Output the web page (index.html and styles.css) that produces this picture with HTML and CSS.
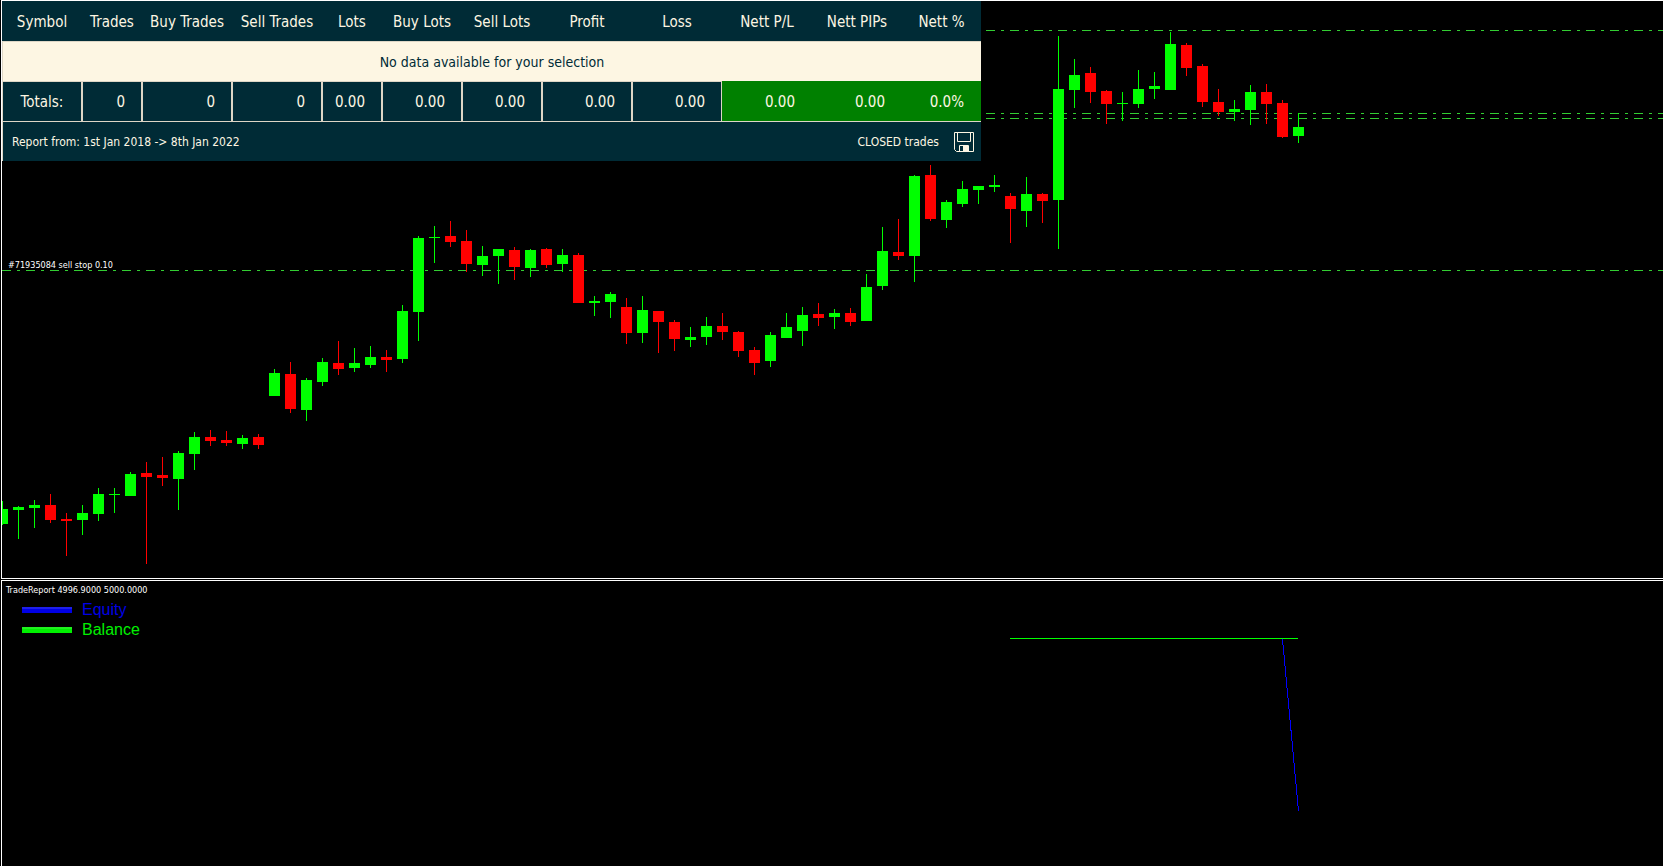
FILE: index.html
```html
<!DOCTYPE html>
<html lang="en">
<head>
  <meta charset="UTF-8">
  <title>Trade Report</title>
  <link rel="stylesheet" href="styles.css">
</head>
<body>

  <main class="terminal">
    <section class="price-panel">
      <svg class="price-chart" id="price-chart" shape-rendering="crispEdges">
        <g class="level">
          <line x1="0" y1="29.5" x2="100%" y2="29.5" />
          <line x1="0" y1="112.5" x2="100%" y2="112.5" />
          <line x1="0" y1="117.5" x2="100%" y2="117.5" />
          <line x1="0" y1="269.5" x2="100%" y2="269.5" />
        </g>
        <g id="candles"></g>
        <text class="order-label" x="6" y="267">#71935084 sell stop 0.10</text>
      </svg>

      <table class="report">
        <colgroup>
          <col class="w80"><col class="w60"><col class="w90"><col class="w90">
          <col class="w60"><col class="w80"><col class="w80"><col class="w90">
          <col class="w90"><col class="w90"><col class="w90"><col>
        </colgroup>
        <thead>
          <tr>
            <th>Symbol</th>
            <th>Trades</th>
            <th>Buy Trades</th>
            <th>Sell Trades</th>
            <th>Lots</th>
            <th>Buy Lots</th>
            <th>Sell Lots</th>
            <th>Profit</th>
            <th>Loss</th>
            <th>Nett P/L</th>
            <th>Nett PIPs</th>
            <th>Nett %</th>
          </tr>
        </thead>
        <tbody>
          <tr>
            <td class="empty" colspan="12">No data available for your selection</td>
          </tr>
          <tr class="totals">
            <th>Totals:</th>
            <td>0</td>
            <td>0</td>
            <td>0</td>
            <td>0.00</td>
            <td>0.00</td>
            <td>0.00</td>
            <td>0.00</td>
            <td>0.00</td>
            <td class="nett">0.00</td>
            <td class="nett">0.00</td>
            <td class="nett">0.0%</td>
          </tr>
        </tbody>
        <tfoot>
          <tr>
            <td colspan="12">
              <div class="status">
                <span>Report from: 1st Jan 2018 -&gt; 8th Jan 2022</span>
                <span class="mode">CLOSED trades</span>
                <button class="save" type="button" aria-label="Save report">
                  <svg width="20" height="20" viewBox="0 0 20 20">
                    <path d="M.5 .5h19v19h-17l-2-2z" />
                    <path d="M3.5 .5v9h13v-9" />
                    <path d="M5.5 19.5v-6h9v6" />
                    <rect x="9" y="14" width="5" height="5" />
                  </svg>
                </button>
              </div>
            </td>
          </tr>
        </tfoot>
      </table>
    </section>

    <section class="equity-panel">
      <svg class="equity-chart" shape-rendering="crispEdges">
        <polyline class="equity" points="1280.5,58 1296.5,230" />
        <line class="balance" x1="1008" y1="57.5" x2="1296" y2="57.5" />
      </svg>
      <div class="indicator">
        <p class="indicator-name">TradeReport 4996.9000 5000.0000</p>
        <ul class="legend">
          <li class="legend-equity">Equity</li>
          <li class="legend-balance">Balance</li>
        </ul>
      </div>
    </section>
  </main>

  <script>
    // direction, high, body top, body bottom, low
    const candles = [
      ['up', 501, 509, 524, 525], ['up', 506, 507, 510, 539], ['up', 500, 505, 508, 528],
      ['down', 494, 505, 520, 523], ['down', 513, 519, 521, 556], ['up', 505, 513, 520, 535],
      ['up', 488, 494, 514, 521], ['up', 488, 494, 495, 513], ['up', 472, 474, 496, 496],
      ['down', 462, 473, 477, 564], ['down', 457, 475, 478, 486], ['up', 451, 453, 479, 510],
      ['up', 432, 437, 454, 470], ['down', 430, 437, 441, 446], ['down', 431, 440, 443, 446],
      ['up', 435, 438, 444, 449], ['down', 434, 437, 445, 449], ['up', 369, 373, 396, 396],
      ['down', 362, 374, 409, 413], ['up', 378, 380, 410, 421], ['up', 358, 362, 382, 386],
      ['down', 341, 363, 369, 375], ['up', 348, 363, 368, 372], ['up', 346, 357, 365, 368],
      ['down', 350, 357, 360, 372], ['up', 305, 311, 359, 363], ['up', 236, 238, 312, 341],
      ['up', 226, 237, 238, 263], ['down', 221, 236, 242, 247], ['down', 230, 241, 264, 272],
      ['up', 246, 256, 265, 276], ['up', 249, 249, 256, 284], ['down', 247, 250, 267, 280],
      ['up', 249, 250, 268, 277], ['down', 248, 249, 265, 268], ['up', 249, 255, 264, 272],
      ['down', 253, 255, 303, 303], ['up', 296, 301, 303, 316], ['up', 292, 294, 302, 318],
      ['down', 298, 307, 333, 344], ['up', 296, 310, 333, 343], ['down', 311, 311, 322, 353],
      ['down', 320, 322, 339, 351], ['up', 327, 337, 340, 347], ['up', 317, 326, 337, 345],
      ['down', 313, 326, 332, 340], ['down', 331, 332, 351, 357], ['down', 347, 350, 363, 375],
      ['up', 332, 335, 361, 367], ['up', 313, 327, 338, 338], ['up', 307, 315, 331, 346],
      ['down', 303, 314, 318, 326], ['up', 309, 313, 317, 329], ['down', 308, 313, 322, 326],
      ['up', 274, 287, 321, 321], ['up', 227, 251, 286, 290], ['down', 219, 252, 256, 260],
      ['up', 175, 176, 256, 282], ['down', 165, 175, 219, 221], ['up', 200, 202, 220, 228],
      ['up', 181, 189, 204, 207], ['up', 186, 186, 190, 204], ['up', 175, 185, 187, 192],
      ['down', 193, 196, 209, 243], ['up', 177, 194, 211, 227], ['down', 193, 194, 201, 223],
      ['up', 36, 89, 200, 249], ['up', 59, 75, 90, 108], ['down', 67, 73, 92, 103],
      ['down', 90, 91, 104, 124], ['up', 92, 103, 104, 121], ['up', 70, 89, 104, 108],
      ['up', 72, 86, 89, 99], ['up', 32, 44, 90, 90], ['down', 43, 45, 68, 76],
      ['down', 64, 66, 102, 107], ['down', 89, 102, 112, 116], ['up', 100, 109, 112, 121],
      ['up', 85, 92, 110, 125], ['down', 84, 92, 104, 124], ['down', 100, 103, 137, 138],
      ['up', 113, 127, 136, 143]
    ];
    const step = 16;
    const bodyWidth = 11;
    const borderTop = 1;
    const group = document.getElementById('candles');

    function addRect(className, x, top, bottom, width) {
      const rect = document.createElementNS('http://www.w3.org/2000/svg', 'rect');
      rect.setAttribute('class', className);
      rect.setAttribute('x', x);
      rect.setAttribute('y', top - borderTop);
      rect.setAttribute('width', width);
      rect.setAttribute('height', bottom - top);
      group.appendChild(rect);
    }

    candles.forEach(([direction, high, top, bottom, low], i) => {
      addRect(direction, i * step, high, low, 1);
      addRect(direction, i * step - 5, top, bottom, bodyWidth);
    });
  </script>
</body>
</html>
```
FILE: styles.css
```css
* {
  box-sizing: border-box;
}

body {
  margin: 0;
  background: #000;
  color: #fff;
  font-family: "DejaVu Sans Condensed", "DejaVu Sans", sans-serif;
}

.terminal {
  display: flex;
  flex-direction: column;
  gap: 1px;
  min-height: 100vh;
  padding-left: 1px;
}

.price-panel,
.equity-panel {
  position: relative;
  border: 1px solid #fff;
  border-right: none;
}

.price-chart {
  display: block;
  width: 100%;
  height: 577px;
}

.level line {
  stroke: #32cd32;
  stroke-dasharray: 9 6 3 6;
}

.up {
  fill: #00ff00;
}

.down {
  fill: #ff0000;
}

.order-label {
  fill: #fff;
  font-size: 9px;
}

/* report table, lies over the price chart */
.report {
  position: absolute;
  top: 0;
  left: 0;
  table-layout: fixed;
  width: 979px;
  border-collapse: separate;
  border-spacing: 0;
  background: #002b36;
  color: #fdf6e3;
  font-size: 15px;
  line-height: 20px;
}

.w60 { width: 60px; }
.w80 { width: 80px; }
.w90 { width: 90px; }

.report th,
.report td {
  height: 40px;
  padding: 0;
  font-weight: normal;
  text-align: center;
  white-space: nowrap;
}

.report thead th {
  padding-top: 2px;
}

.report .empty {
  border-top: 1px solid #ddd6c6;
  border-left: 1px solid #ddd6c6;
  background: #fdf6e3;
  color: #002b36;
  font-size: 14px;
}

.report .totals th,
.report .totals td {
  border: 1px solid #ddd6c6;
  border-bottom: none;
}

.report .totals td {
  padding-right: 16px;
  text-align: right;
}

.report .totals .nett {
  border-color: #008000;
  background: #008000;
}

.report tfoot td {
  border-top: 1px solid #ddd6c6;
  border-left: 1px solid #ddd6c6;
}

.status {
  display: flex;
  align-items: center;
  padding: 0 7px 0 9px;
  font-size: 12px;
}

.mode {
  margin-left: auto;
}

.save {
  display: flex;
  margin-left: 15px;
  padding: 0;
  border: none;
  background: none;
  cursor: pointer;
}

.save path {
  fill: none;
  stroke: #fdf6e3;
}

.save rect {
  fill: #fdf6e3;
}

/* equity and balance */
.equity-panel {
  flex: 1;
  border-bottom: none;
}

.equity-chart {
  position: absolute;
  width: 100%;
  height: 100%;
}

.equity {
  fill: none;
  stroke: #0000ff;
}

.balance {
  stroke: #00ff00;
}

.indicator {
  position: relative;
  padding: 2px 4px;
}

.indicator-name {
  margin: 0;
  font-size: 9px;
  line-height: 14px;
}

.legend {
  margin: 3px 0 0 16px;
  padding: 0;
  list-style: none;
  font-family: "Liberation Sans", Arial, sans-serif;
  font-size: 16px;
  line-height: 20px;
}

.legend li {
  display: flex;
  align-items: center;
  gap: 10px;
}

.legend li::before {
  content: "";
  width: 50px;
  height: 4px;
  background: currentColor;
  border-top: 2px solid rgba(255, 255, 255, 0.12);
}

.legend-equity {
  color: #0000e6;
}

.legend-balance {
  color: #00f000;
}
```
